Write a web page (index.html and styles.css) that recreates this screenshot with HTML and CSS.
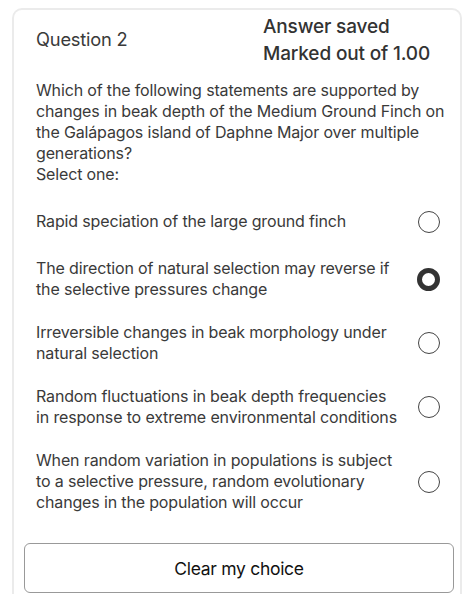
FILE: index.html
```html
<!DOCTYPE html>
<html>
<head>
<meta charset="utf-8">
<link rel="stylesheet" href="styles.css">
</head>
<body>
<div class="card">
  <div class="head">
    <div class="qno">Question 2</div>
    <div class="status">
      <div>Answer saved</div>
      <div>Marked out of 1.00</div>
    </div>
  </div>
  <div class="qtext">Which of the following statements are supported by changes in beak depth of the Medium Ground Finch on the Galápagos island of Daphne Major over multiple generations?</div>
  <div class="prompt">Select one:</div>
  <div class="options">
    <div class="opt"><div class="label">Rapid speciation of the large ground finch</div><span class="radio"></span></div>
    <div class="opt"><div class="label">The direction of natural selection may reverse if the selective pressures change</div><span class="radio on"></span></div>
    <div class="opt"><div class="label">Irreversible changes in beak morphology under natural selection</div><span class="radio"></span></div>
    <div class="opt"><div class="label">Random fluctuations in beak depth frequencies in response to extreme environmental conditions</div><span class="radio"></span></div>
    <div class="opt"><div class="label">When random variation in populations is subject to a selective pressure, random evolutionary changes in the population will occur</div><span class="radio"></span></div>
  </div>
  <div class="btn">Clear my choice</div>
</div>
</body>
</html>
```
FILE: styles.css
```css
html, body { margin: 0; padding: 0; background: #fff; }
body {
  font-family: Inter, "Liberation Sans", sans-serif;
  color: #3a3a3a;
  padding: 8px 12px 0 12px;
  overflow: hidden;
  height: 594px;
  box-sizing: border-box;
}
.card {
  border: 2px solid #ebebeb;
  border-bottom: none;
  border-radius: 10px 10px 0 0;
  padding: 3px 8px 0 22px;
  height: 586px;
  box-sizing: border-box;
  overflow: hidden;
}
.head {
  display: flex;
  justify-content: space-between;
}
.qno { padding-top: 15px; font-size: 18.3px; letter-spacing: -0.2px; }
.status {
  width: 189px;
  font-size: 19px;
  font-weight: 500;
  line-height: 27px;
  color: #333;
  letter-spacing: -0.15px;
}
.qtext {
  margin-top: 13px;
  font-size: 16px;
  line-height: 21px;
  letter-spacing: -0.15px;
  padding-right: 6px;
}
.prompt {
  font-size: 16px;
  line-height: 21px;
  letter-spacing: -0.15px;
}
.options { margin-top: 22px; display: flex; flex-direction: column; gap: 22px; }
.opt {
  display: flex;
  align-items: center;
  justify-content: space-between;
  padding-right: 12px;
  min-height: 29px;
}
.label {
  width: 362px;
  font-size: 16px;
  line-height: 21px;
  letter-spacing: -0.15px;
}
.radio {
  width: 20px; height: 20px;
  border: 1.5px solid #444;
  border-radius: 50%;
  flex: none;
}
.radio.on {
  width: 13px; height: 13px;
  border: 5px solid #333;
}
.btn {
  margin: 30px 0 0 -12px;
  width: 428px;
  height: 48px;
  border: 1.5px solid #999;
  border-radius: 6px;
  display: flex;
  align-items: center;
  justify-content: center;
  font-size: 17.5px;
  color: #111;
  letter-spacing: -0.3px;
}
```
